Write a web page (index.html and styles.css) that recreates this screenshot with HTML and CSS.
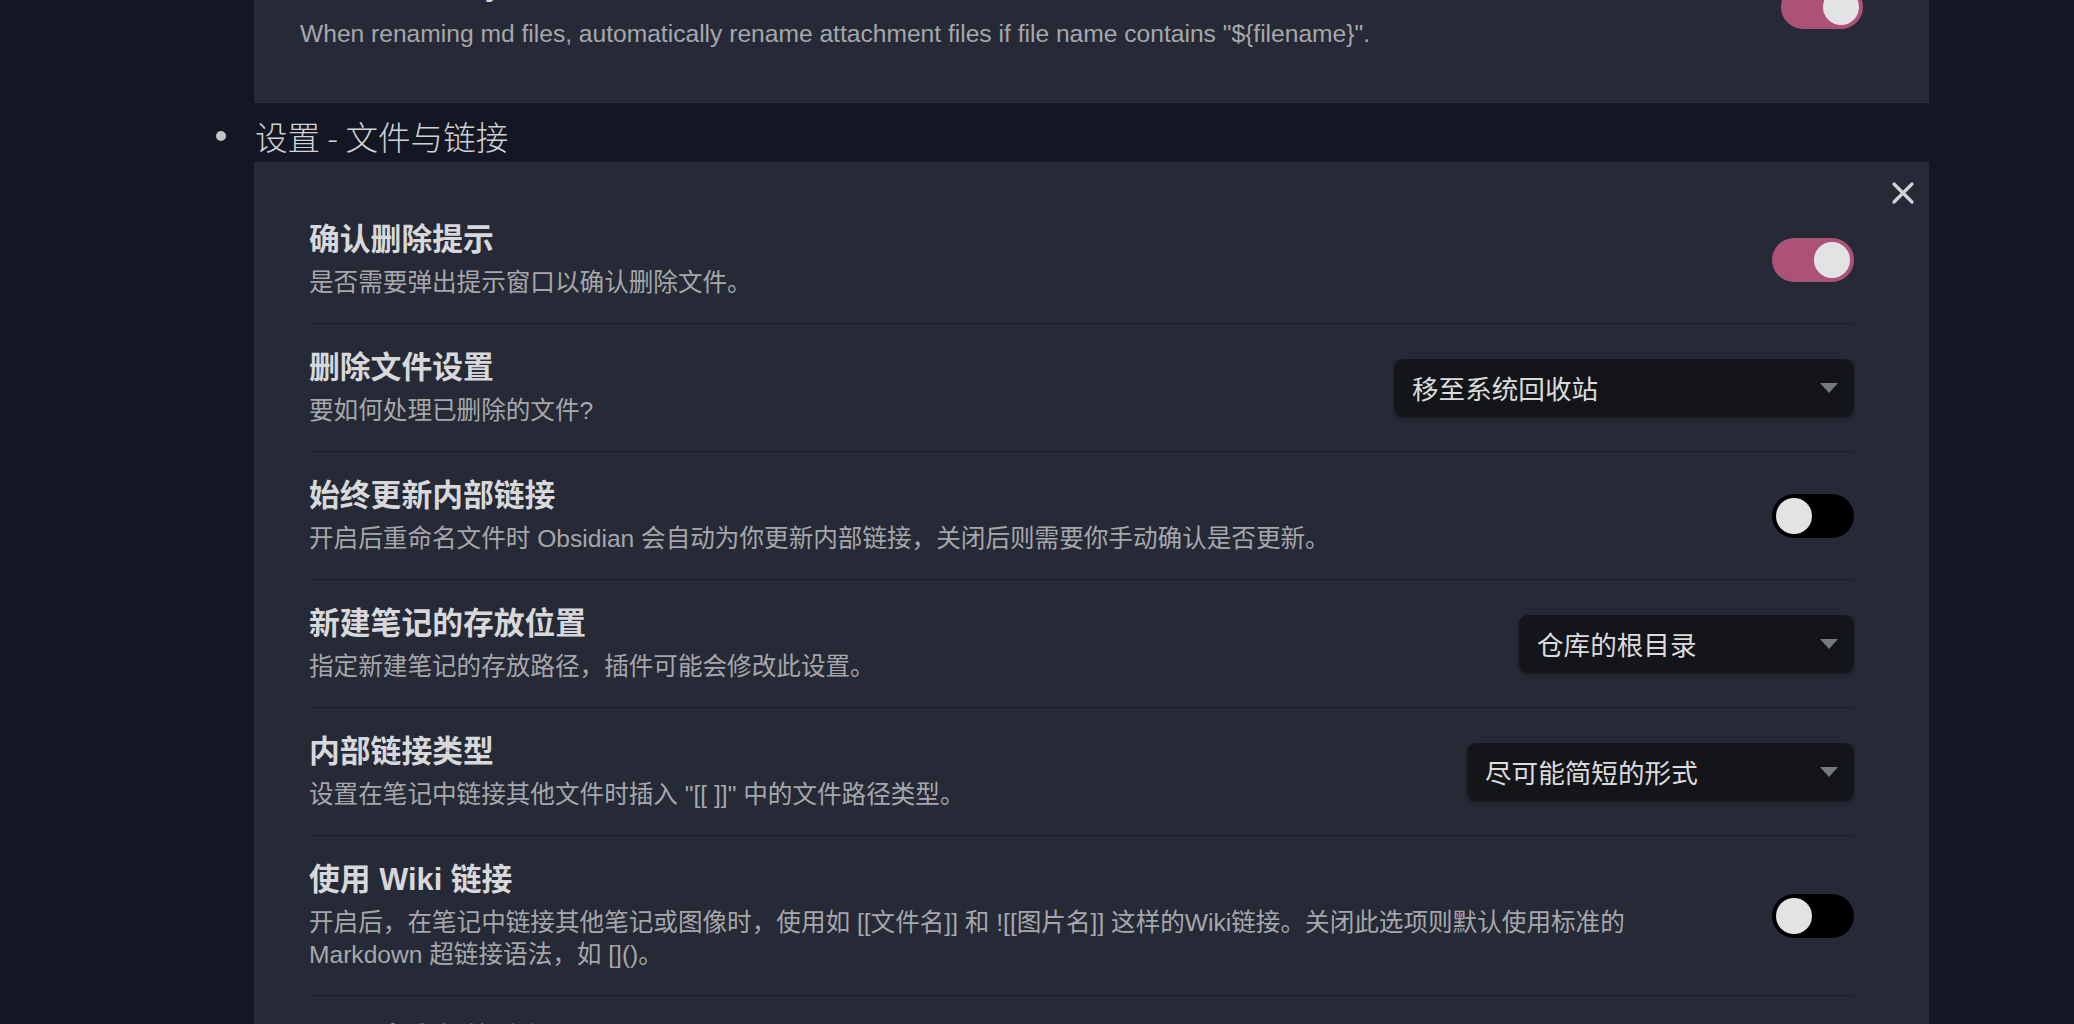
FILE: index.html
```html
<!DOCTYPE html>
<html lang="zh-CN">
<head>
<meta charset="utf-8">
<title>设置 - 文件与链接</title>
<link rel="stylesheet" href="styles.css">
</head>
<body>
<div class="doc">
  <section class="card card-top">
    <div class="setting">
      <div class="info">
        <div class="name">Automatically rename attachment files</div>
        <div class="desc">When renaming md files, automatically rename attachment files if file name contains "${filename}".</div>
      </div>
      <div class="toggle on toggle-lift"><span class="knob"></span></div>
    </div>
  </section>

  <div class="li">
    <span class="bullet"></span>
    <span class="li-text">设置 - 文件与链接</span>
  </div>

  <section class="card card-modal">
    <button class="close" aria-label="关闭">
      <svg viewBox="0 0 24 24" width="24" height="24"><path d="M3 3 L21 21 M21 3 L3 21" stroke="#d2d3d6" stroke-width="3.2" stroke-linecap="round" fill="none"/></svg>
    </button>

    <div class="setting">
      <div class="info">
        <div class="name">确认删除提示</div>
        <div class="desc">是否需要弹出提示窗口以确认删除文件。</div>
      </div>
      <div class="toggle on"><span class="knob"></span></div>
    </div>

    <div class="setting">
      <div class="info">
        <div class="name">删除文件设置</div>
        <div class="desc">要如何处理已删除的文件?</div>
      </div>
      <div class="dropdown dd-trash"><span>移至系统回收站</span><svg class="caret" viewBox="0 0 18 10" width="18" height="10"><path d="M0 0 H18 L9 10 Z" fill="#75787f"/></svg></div>
    </div>

    <div class="setting">
      <div class="info">
        <div class="name">始终更新内部链接</div>
        <div class="desc">开启后重命名文件时 Obsidian 会自动为你更新内部链接，关闭后则需要你手动确认是否更新。</div>
      </div>
      <div class="toggle"><span class="knob"></span></div>
    </div>

    <div class="setting">
      <div class="info">
        <div class="name">新建笔记的存放位置</div>
        <div class="desc">指定新建笔记的存放路径，插件可能会修改此设置。</div>
      </div>
      <div class="dropdown dd-root"><span>仓库的根目录</span><svg class="caret" viewBox="0 0 18 10" width="18" height="10"><path d="M0 0 H18 L9 10 Z" fill="#75787f"/></svg></div>
    </div>

    <div class="setting">
      <div class="info">
        <div class="name">内部链接类型</div>
        <div class="desc">设置在笔记中链接其他文件时插入 "[[ ]]" 中的文件路径类型。</div>
      </div>
      <div class="dropdown dd-link"><span>尽可能简短的形式</span><svg class="caret" viewBox="0 0 18 10" width="18" height="10"><path d="M0 0 H18 L9 10 Z" fill="#75787f"/></svg></div>
    </div>

    <div class="setting">
      <div class="info">
        <div class="name">使用 Wiki 链接</div>
        <div class="desc">开启后，在笔记中链接其他笔记或图像时，使用如 [[文件名]] 和 ![[图片名]] 这样的Wiki链接。关闭此选项则默认使用标准的 Markdown 超链接语法，如 []()。</div>
      </div>
      <div class="toggle"><span class="knob"></span></div>
    </div>

    <div class="setting">
      <div class="info">
        <div class="name">附件默认存放路径</div>
        <div class="desc">指定新插入附件的默认存放路径。</div>
      </div>
    </div>
  </section>
</div>
</body>
</html>
```

FILE: styles.css
```css
html, body {
  margin: 0;
  padding: 0;
}
body {
  background: #131724;
  width: 2074px;
  height: 1024px;
  overflow: hidden;
  font-family: "Liberation Sans", "Noto Sans CJK SC", sans-serif;
  color: #d9d9db;
}
.doc {
  margin-left: 254px;
  width: 1675px;
}
.card {
  background: #262a37;
  box-sizing: border-box;
}
.card-top {
  margin-top: -59px;
  padding: 24px 66px 53px 46px;
}
.card-top .setting {
  padding: 0;
}
.card-top .desc {
  margin-top: 14px;
}
.toggle-lift {
  margin-bottom: 2px;
}

/* list item heading */
.li {
  display: flex;
  align-items: center;
  gap: 29px;
  margin-left: -38px;
  padding: 10px 0 4px;
  height: 45px;
}
.bullet {
  width: 10px;
  height: 10px;
  border-radius: 50%;
  background: #c4c4c6;
  flex: none;
}
.li-text {
  font-family: "Noto Sans CJK SC", sans-serif;
  font-weight: 300;
  font-size: 32.6px;
  line-height: 45px;
  color: #d2d2d4;
}

/* modal-like card */
.card-modal {
  position: relative;
  padding: 34px 75px 0 55px;
  min-height: 900px;
}
.close {
  position: absolute;
  top: 19px;
  right: 14px;
  width: 24px;
  height: 24px;
  padding: 0;
  border: 0;
  background: none;
  display: flex;
}

.setting {
  display: flex;
  align-items: center;
  justify-content: space-between;
  padding: 24px 0;
}
.card-modal .setting + .setting {
  border-top: 1px solid #1c1f29;
}
.info {
  flex: 1 1 auto;
  min-width: 0;
}
.name {
  font-size: 30.8px;
  line-height: 39px;
  font-weight: 700;
  color: #d8d8da;
  white-space: nowrap;
}
.desc {
  margin-top: 8px;
  font-size: 24.6px;
  line-height: 32px;
  color: #a6a7ab;
  max-width: 1370px;
}

/* toggle */
.toggle {
  flex: none;
  width: 82px;
  height: 44px;
  border-radius: 22px;
  background: #000;
  box-sizing: border-box;
  padding: 4px;
  display: flex;
  justify-content: flex-start;
  margin-left: 32px;
}
.toggle.on {
  background: #ad5277;
  justify-content: flex-end;
}
.knob {
  width: 36px;
  height: 36px;
  border-radius: 50%;
  background: #e3e3e5;
}

/* dropdown */
.dropdown {
  flex: none;
  height: 58px;
  box-sizing: border-box;
  border-radius: 9px;
  background: #141519;
  box-shadow: 0 2px 4px rgba(0, 0, 0, 0.35);
  display: flex;
  align-items: center;
  justify-content: space-between;
  padding: 0 16px 0 18px;
  font-size: 26.6px;
  color: #dcdcde;
  margin-left: 32px;
}
.dropdown span {
  font-family: "Noto Sans CJK SC", sans-serif;
}
.caret {
  flex: none;
}
.dd-trash { width: 460px; }
.dd-root { width: 335px; }
.dd-link { width: 387px; }
```
